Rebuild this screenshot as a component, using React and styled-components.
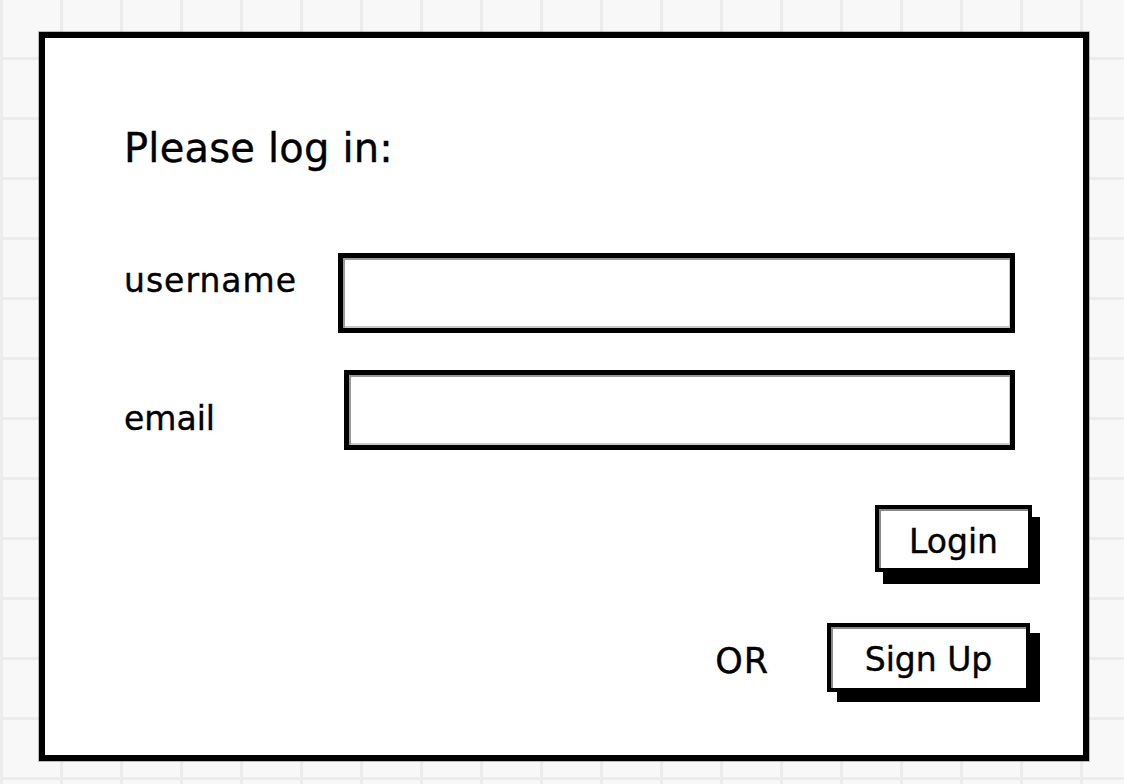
import React from "react"
import styled, { createGlobalStyle } from "styled-components"

const GlobalStyle = createGlobalStyle`
  html, body {
    margin: 0;
    padding: 0;
  }
  body {
    background-color: #f8f8f8;
    background-image:
      linear-gradient(to right, #ececec 3px, transparent 3px),
      linear-gradient(to bottom, #ececec 3px, transparent 3px);
    background-size: 60px 60px;
    background-position: 0 57px;
    font-family: "DejaVu Sans", "Liberation Sans", sans-serif;
    color: #000;
    -webkit-text-stroke: 0.4px #000;
  }
`

export default function App() {
  return (
    <>
      <GlobalStyle />
      <Page>
        <Frame>
          <Title>Please log in:</Title>
          <FieldRow $top={81}>
            <Label $offset={8} $spacing={1}>username</Label>
            <TextBox type="text" $indent={0} />
          </FieldRow>
          <FieldRow $top={37}>
            <Label $offset={29} $spacing={0}>email</Label>
            <TextBox type="text" $indent={6} />
          </FieldRow>
          <ActionRow $top={55}>
            <Button $width={157} $height={67} $shadowX={8} $shadowY={12} $lift={6}>
              Login
            </Button>
          </ActionRow>
          <ActionRow $top={51}>
            <Or>OR</Or>
            <Button
              $width={203}
              $height={69}
              $shadowX={10}
              $shadowY={10}
              $lift={4}
              $right={2}
            >
              Sign Up
            </Button>
          </ActionRow>
        </Frame>
      </Page>
    </>
  )
}

const Page = styled.div`
  min-height: 100vh;
  box-sizing: border-box;
  padding: 32px 0 0 39px;
`
const Frame = styled.div`
  box-sizing: border-box;
  width: 1050px;
  height: 729px;
  border: 6px solid #000;
  box-shadow: 0 0 0 1px rgba(0, 0, 0, 0.25);
  background: #fff;
  padding: 86px 51px 0 79px;
  display: flex;
  flex-direction: column;
`
const Title = styled.h1`
  margin: 0;
  font-size: 40px;
  line-height: 48px;
  font-weight: normal;
  letter-spacing: 0.2px;
`
const FieldRow = styled.div`
  display: flex;
  align-items: flex-start;
  margin-top: ${(p) => p.$top}px;
  padding-right: 17px;
`
const Label = styled.div`
  flex: 0 0 214px;
  margin-top: ${(p) => p.$offset}px;
  font-size: 33px;
  line-height: 40px;
  letter-spacing: ${(p) => p.$spacing}px;
`
const TextBox = styled.input`
  flex: 1;
  min-width: 0;
  box-sizing: border-box;
  height: 80px;
  margin: 0 0 0 ${(p) => p.$indent}px;
  border: 5px solid #000;
  border-radius: 0;
  background: #fff;
  box-shadow: inset 2px 2px 0 #9a9a9a, inset -1px -2px 0 #c8c8c8;
  outline: none;
  font-family: inherit;
  font-size: 30px;
`
const ActionRow = styled.div`
  display: flex;
  justify-content: flex-end;
  align-items: flex-start;
  gap: 58px;
  margin-top: ${(p) => p.$top}px;
`
const Or = styled.span`
  margin-top: 18px;
  font-size: 35px;
  line-height: 40px;
  letter-spacing: 1px;
`
const Button = styled.button`
  box-sizing: border-box;
  width: ${(p) => p.$width}px;
  height: ${(p) => p.$height}px;
  margin-right: ${(p) => p.$right || 0}px;
  padding: ${(p) => p.$lift}px 0 0;
  display: flex;
  align-items: center;
  justify-content: center;
  border: 4px solid #000;
  border-radius: 0;
  background: #fff;
  box-shadow: inset 2px 2px 0 #8a8a8a,
    ${(p) => `${p.$shadowX}px ${p.$shadowY}px 0 #000`};
  font-family: inherit;
  font-size: 33px;
  color: #000;
  -webkit-text-stroke: 0.4px #000;
  cursor: pointer;
`
